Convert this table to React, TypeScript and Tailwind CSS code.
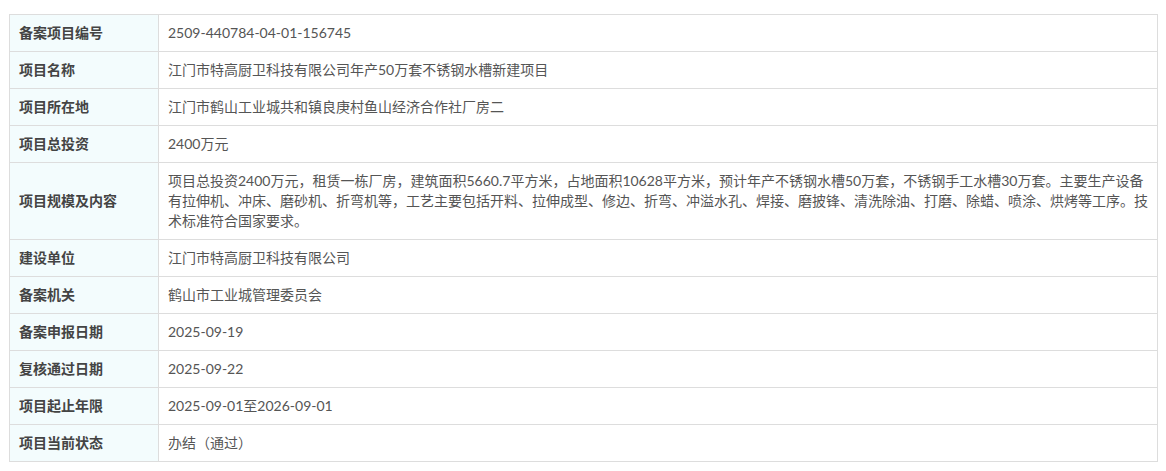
const rows: { label: string; value: React.ReactNode }[] = [
  { label: '备案项目编号', value: '2509-440784-04-01-156745' },
  { label: '项目名称', value: '江门市特高厨卫科技有限公司年产50万套不锈钢水槽新建项目' },
  { label: '项目所在地', value: '江门市鹤山工业城共和镇良庚村鱼山经济合作社厂房二' },
  { label: '项目总投资', value: '2400万元' },
  {
    label: '项目规模及内容',
    value: (
      <>
        项目总投资2400万元，租赁一栋厂房，建筑面积5660.7平方米，占地面积10628平方米，预计年产不锈钢水槽50万套，不锈钢手工水槽30万套。主要生产设备
        <br />
        有拉伸机、冲床、磨砂机、折弯机等，工艺主要包括开料、拉伸成型、修边、折弯、冲溢水孔、焊接、磨披锋、清洗除油、打磨、除蜡、喷涂、烘烤等工序。技
        <br />
        术标准符合国家要求。
      </>
    ),
  },
  { label: '建设单位', value: '江门市特高厨卫科技有限公司' },
  { label: '备案机关', value: '鹤山市工业城管理委员会' },
  { label: '备案申报日期', value: '2025-09-19' },
  { label: '复核通过日期', value: '2025-09-22' },
  { label: '项目起止年限', value: '2025-09-01至2026-09-01' },
  { label: '项目当前状态', value: '办结（通过）' },
];

export default function App() {
  return (
    <div
      className="min-h-screen bg-white pt-[14px] pl-[9px] pr-[8px]"
      style={{ fontFamily: 'Lato, "Noto Sans CJK SC", sans-serif' }}
    >
      <table className="w-[1149px] border-collapse text-[14px] leading-[20px]">
        <tbody>
          {rows.map((r) => (
            <tr key={r.label}>
              <td className="w-[149px] border border-[#dddddd] bg-[#f3fcfd] px-[9px] py-[8px] font-bold text-[#444444] align-middle whitespace-nowrap">
                {r.label}
              </td>
              <td className="border border-[#dddddd] px-[9px] py-[8px] text-[#555555] align-middle whitespace-nowrap">
                {r.value}
              </td>
            </tr>
          ))}
        </tbody>
      </table>
    </div>
  );
}
